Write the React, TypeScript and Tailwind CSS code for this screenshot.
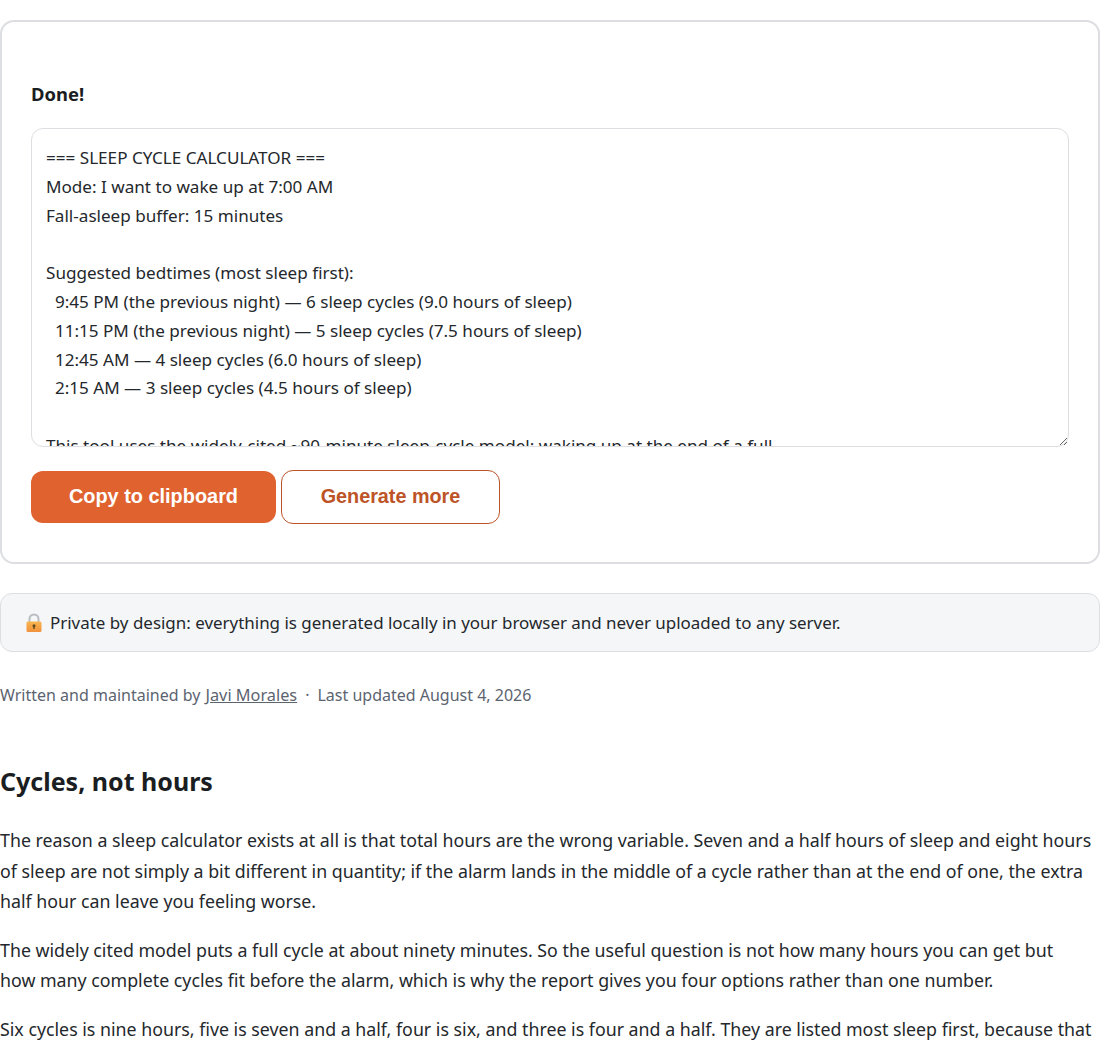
const report = `=== SLEEP CYCLE CALCULATOR ===
Mode: I want to wake up at 7:00 AM
Fall-asleep buffer: 15 minutes

Suggested bedtimes (most sleep first):
  9:45 PM (the previous night) — 6 sleep cycles (9.0 hours of sleep)
  11:15 PM (the previous night) — 5 sleep cycles (7.5 hours of sleep)
  12:45 AM — 4 sleep cycles (6.0 hours of sleep)
  2:15 AM — 3 sleep cycles (4.5 hours of sleep)

This tool uses the widely-cited ~90-minute sleep-cycle model: waking up at the end of a full
cycle tends to feel better than waking up in the middle of one.`;

function LockIcon() {
	return (
		<svg width="18" height="20" viewBox="0 0 18 20" className="shrink-0">
			<defs>
				<linearGradient id="lock-body" x1="0" y1="0" x2="0" y2="1">
					<stop offset="0" stopColor="#f8b64f" />
					<stop offset="1" stopColor="#f1913c" />
				</linearGradient>
			</defs>
			<path d="M4.5 9V6a4.5 4.5 0 0 1 9 0v3" fill="none" stroke="#b8bcc2" strokeWidth="2" />
			<rect x="1.5" y="8.5" width="15" height="10.5" rx="1.5" fill="url(#lock-body)" />
			<circle cx="9" cy="12.8" r="1.5" fill="#5f4a1e" />
			<rect x="8.3" y="13" width="1.4" height="3" fill="#5f4a1e" />
		</svg>
	);
}

export default function App() {
	return (
		<div className="h-[1048px] overflow-hidden bg-white font-['Noto_Sans',sans-serif] text-[17.8px] leading-[30.6px] text-[#24282c]">
			<div className="pt-5">
				<section className="h-[544px] rounded-[14px] border-2 border-[#dcdee1] px-[29px] pt-[57px]">
					<p className="text-[18.4px] leading-[30px] font-bold text-[#1a1d21]">Done!</p>
					<textarea
						readOnly
						defaultValue={report}
						className="mt-[19px] block h-[319px] w-full resize-y rounded-[12px] border border-[#dcdee1] px-[14px] py-[15px] text-[17.1px] leading-[28.8px] outline-none"
					/>
					<div className="mt-[23px] flex items-center gap-[5px] font-['Liberation_Sans',sans-serif] font-bold">
						<button className="h-[52px] w-[245px] rounded-[12px] bg-[#e0622f] pb-[2px] text-[19.9px] text-white">
							Copy to clipboard
						</button>
						<button className="h-[54px] w-[219px] rounded-[12px] border border-[#bd5427] bg-white pb-[2px] text-[19.8px] text-[#bd5427]">
							Generate more
						</button>
					</div>
				</section>
				<div className="mt-[29px] flex h-[59px] items-center gap-[7px] rounded-[12px] border border-[#dcdee1] bg-[#f4f6f8] px-6 pt-[1px] text-[16.95px]">
					<LockIcon />
					<span>Private by design: everything is generated locally in your browser and never uploaded to any server.</span>
				</div>
				<p className="mt-[29px] text-[16px] leading-[29px] text-[#5c6470]">
					Written and maintained by <a className="ml-[1px] text-[16.3px] underline">Javi Morales</a>
					<span className="mx-[8px]">·</span>Last updated August 4, 2026
				</p>
				<h2 className="mt-[55px] text-[25px] leading-[32px] font-bold text-[#1a1d21]">Cycles, not hours</h2>
				<p className="mt-[28px]">
					The reason a sleep calculator exists at all is that total hours are the wrong variable. Seven and a half hours of sleep and eight hours of sleep are not simply a bit different in quantity; if the alarm lands in the middle of a cycle rather than at the end of one, the extra half hour can leave you feeling worse.
				</p>
				<p className="mt-[18px]">
					The widely cited model puts a full cycle at about ninety minutes. So the useful question is not how many hours you can get but<br />
					how many complete cycles fit before the alarm, which is why the report gives you four options rather than one number.
				</p>
				<p className="mt-[18px]">
					Six cycles is nine hours, five is seven and a half, four is six, and three is four and a half. They are listed most sleep first, because that is the order most people want to read them in.
				</p>
			</div>
		</div>
	);
}
